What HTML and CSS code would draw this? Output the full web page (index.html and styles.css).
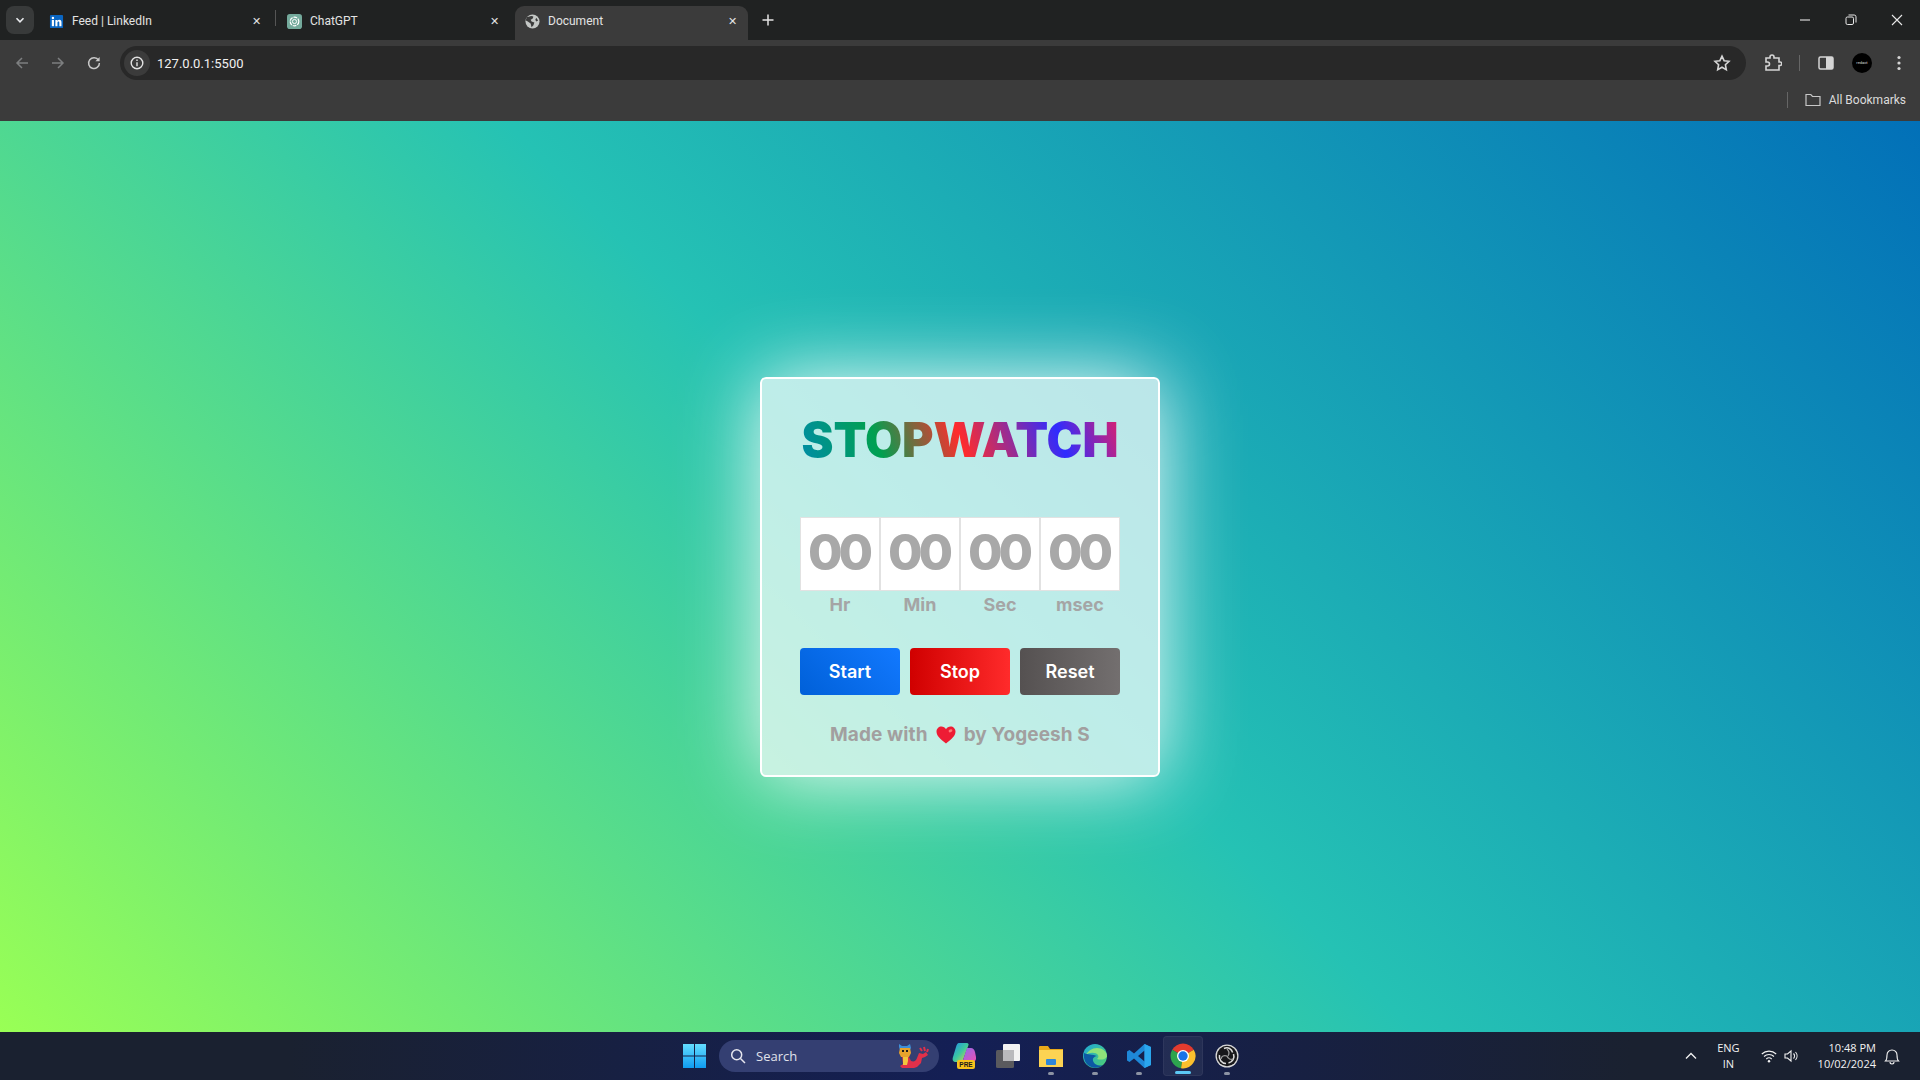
FILE: index.html
```html
<!DOCTYPE html>
<html lang="en">
<head>
	<meta charset="UTF-8">
	<title>Document</title>
	<link rel="stylesheet" href="styles.css">
</head>
<body>
	<!-- browser chrome -->
	<header class="chrome">
		<div class="tabstrip">
			<div class="tab-search">
				<svg width="10" height="10" viewBox="0 0 10 10"><path d="M1.5 3.2 5 6.8l3.5-3.6" fill="none" stroke="#e8eaed" stroke-width="1.6"/></svg>
			</div>
			<div class="tab tab-one">
				<svg class="favicon" viewBox="0 0 16 16"><rect x="1" y="1" width="14" height="14" rx="1" fill="#0a66c2"/><rect x="3" y="6.4" width="2.3" height="6.6" fill="#fff"/><circle cx="4.15" cy="4.2" r="1.3" fill="#fff"/><path d="M6.8 6.4h2.2v1c.5-.8 1.2-1.2 2.1-1.2 1.6 0 2.2 1 2.2 2.7V13H11V9.3c0-.9-.3-1.3-.9-1.3-.7 0-1.1.5-1.1 1.4V13H6.8z" fill="#fff"/></svg>
				<span class="tab-title">Feed | LinkedIn</span>
				<span class="tab-close">✕</span>
			</div>
			<div class="tab-sep"></div>
			<div class="tab tab-two">
				<svg class="favicon" viewBox="0 0 16 16"><rect width="16" height="16" rx="3" fill="#74aa9c"/><circle cx="8" cy="8" r="4.6" fill="none" stroke="#fff" stroke-width="1.3" stroke-dasharray="4 1"/><circle cx="8" cy="8" r="2.2" fill="none" stroke="#fff" stroke-width="1"/></svg>
				<span class="tab-title">ChatGPT</span>
				<span class="tab-close">✕</span>
			</div>
			<div class="tab tab-active">
				<svg class="favicon" viewBox="0 0 16 16"><circle cx="8" cy="8" r="7.5" fill="#c4c7c5"/><path d="M4 3c2-1 4-1 5 0L8 5 6 6l1 2 3 1-1 3-2 2-1-4-3-2-2-1c0-2 1-3 1-4zM12 4l2 3-2 1-1-2z" fill="#3b3b3b"/></svg>
				<span class="tab-title">Document</span>
				<span class="tab-close">✕</span>
			</div>
			<div class="new-tab">
				<svg width="12" height="12" viewBox="0 0 12 12"><path d="M6 .5v11M.5 6h11" stroke="#e3e3e3" stroke-width="1.5"/></svg>
			</div>
			<div class="win-btns">
				<svg width="12" height="12" viewBox="0 0 12 12"><path d="M1 6h10" stroke="#e8e8e8" stroke-width="1.1"/></svg>
				<svg width="12" height="12" viewBox="0 0 12 12"><rect x="1" y="3" width="7.5" height="7.5" rx="1.4" fill="none" stroke="#e8e8e8"/><path d="M3.500 1h5.700A1.800 1.800 0 0 1 11 2.800v5.700" fill="none" stroke="#e8e8e8"/></svg>
				<svg width="12" height="12" viewBox="0 0 12 12"><path d="M1 1l10 10M11 1 1 11" stroke="#e8e8e8" stroke-width="1.1"/></svg>
			</div>
		</div>

		<div class="toolbar">
			<div class="nav-btns">
				<svg width="14" height="14" viewBox="0 0 14 14"><path d="M13 7H2M7 2 2 7l5 5" fill="none" stroke="#7d7f80" stroke-width="1.5"/></svg>
				<svg width="14" height="14" viewBox="0 0 14 14"><path d="M1 7h11M7 2l5 5-5 5" fill="none" stroke="#7d7f80" stroke-width="1.5"/></svg>
				<svg width="14" height="14" viewBox="0 0 14 14"><path d="M11.6 4.300A5.400 5.400 0 1 0 12.4 7" fill="none" stroke="#c7c7c7" stroke-width="1.5"/><path d="M12.6 1v4.200H8.400z" fill="#c7c7c7"/></svg>
			</div>
			<div class="omnibox">
				<div class="site-info">
					<svg width="14" height="14" viewBox="0 0 14 14"><circle cx="7" cy="7" r="5.800" fill="none" stroke="#e3e3e3" stroke-width="1.4"/><path d="M7 6.200v4M7 3.600v1.500" stroke="#e3e3e3" stroke-width="1.4"/></svg>
				</div>
				<span class="url">127.0.0.1:5500</span>
				<svg class="star" width="18" height="18" viewBox="0 0 18 18"><path d="m9 2.200 2.100 4.500 4.900.6-3.600 3.400.9 4.900L9 13.200l-4.300 2.400.9-4.900L2 7.300l4.900-.6z" fill="none" stroke="#d5d5d5" stroke-width="1.6"/></svg>
			</div>
			<div class="tool-icons">
				<svg width="18" height="18" viewBox="0 0 18 18"><path d="M2 4h4V3a2 2 0 0 1 4 0v1h5v4h1a1.700 1.700 0 0 1 0 3.500h-1V16H2v-4h1.500a2 2 0 0 0 0-4H2z" fill="none" stroke="#d5d5d5" stroke-width="1.6"/></svg>
				<span class="tool-sep"></span>
				<svg class="side-panel" width="16" height="16" viewBox="0 0 16 16"><rect x="1" y="2" width="14" height="12" rx="1.500" fill="none" stroke="#d5d5d5" stroke-width="1.5"/><rect x="8" y="2" width="7" height="12" fill="#d5d5d5"/></svg>
				<span class="avatar">redact</span>
				<svg class="menu-dots" width="6" height="16" viewBox="0 0 6 16"><circle cx="3" cy="2.500" r="1.600" fill="#d5d5d5"/><circle cx="3" cy="8" r="1.600" fill="#d5d5d5"/><circle cx="3" cy="13.500" r="1.600" fill="#d5d5d5"/></svg>
			</div>
		</div>

		<div class="bookmarks">
			<span class="tool-sep"></span>
			<svg width="16" height="14" viewBox="0 0 16 14"><path d="M1 12.500V1.500h4.800l1.700 2H15v9z" fill="none" stroke="#c7c7c7" stroke-width="1.2"/></svg>
			<span class="bm-label">All Bookmarks</span>
		</div>
	</header>

	<!-- page -->
	<main class="page">
		<section class="card">
			<h1 class="title">STOPWATCH</h1>
			<div class="timer">
				<div class="unit"><div class="digits">00</div><div class="unit-name">Hr</div></div>
				<div class="unit"><div class="digits">00</div><div class="unit-name">Min</div></div>
				<div class="unit"><div class="digits">00</div><div class="unit-name">Sec</div></div>
				<div class="unit"><div class="digits">00</div><div class="unit-name">msec</div></div>
			</div>
			<div class="buttons">
				<button class="btn btn-start">Start</button>
				<button class="btn btn-stop">Stop</button>
				<button class="btn btn-reset">Reset</button>
			</div>
			<p class="made">
				Made with
				<svg class="heart" width="20" height="18" viewBox="0 0 20 18"><path d="M10 17.500C4 13 .5 9.700.5 5.600.5 2.600 2.800.5 5.400.5 7.300.5 9 1.500 10 3.300 11 1.500 12.700.5 14.600.5c2.600 0 4.900 2.100 4.900 5.100 0 4.100-3.500 7.400-9.500 11.900z" fill="#ee1c34"/><ellipse cx="14.500" cy="4.800" rx="2" ry="1.400" fill="#f77" transform="rotate(-30 14.500 4.800)"/></svg>
				by Yogeesh S
			</p>
		</section>
	</main>

	<!-- windows taskbar -->
	<footer class="taskbar">
		<div></div>
		<div class="task-center">
			<svg class="win-logo" width="23" height="24" viewBox="0 0 23 24"><defs><linearGradient id="winG" x1="0" y1="0" x2="0" y2="1"><stop offset="0" stop-color="#63dcff"/><stop offset="1" stop-color="#0f9cf0"/></linearGradient></defs><path d="M0 0h11v11.500H0zM12 0h11v11.500H12zM0 12.500h11V24H0zM12 12.500h11V24H12z" fill="url(#winG)"/></svg>
			<div class="search-pill">
				<svg width="16" height="16" viewBox="0 0 16 16"><circle cx="6.700" cy="6.700" r="5" fill="none" stroke="#e6e6ee" stroke-width="1.5"/><path d="m10.500 10.500 4.500 4.500" stroke="#e6e6ee" stroke-width="1.5"/></svg>
				<span class="search-text">Search</span>
				<svg class="dragon" width="34" height="26" viewBox="0 0 34 26">
					<path d="M3 1l3 2h5l3-2 1 4-1 2H4L3 4z" fill="#3f8fd8"/>
					<path d="M4 5h10l1 5-2 4H5l-2-4z" fill="#e8a22c"/>
					<rect x="6" y="7" width="2" height="2" fill="#1c1c1c"/>
					<rect x="10" y="7" width="2" height="2" fill="#1c1c1c"/>
					<path d="M6 14h7l2 4c3 1 5 0 6-3l2-5 4 1 3-2 2 3-3 2-3 1-1 5-4 4-3 1H9l-3 0-2-2 3-2z" fill="#e0304a"/>
					<path d="M7 14h5v4l-1 4H7z" fill="#f2c53d"/>
					<path d="M24 5l2 3M28 4l1 4M32 6l-1 3" stroke="#e0304a" stroke-width="2"/>
				</svg>
			</div>
			<svg class="task-icon task-copilot" width="24" height="28" viewBox="0 0 24 28"><defs><linearGradient id="copL" x1="0" y1="0" x2="1" y2="1"><stop offset="0" stop-color="#1f8fe8"/><stop offset=".5" stop-color="#3cc8a0"/><stop offset="1" stop-color="#f2d53c"/></linearGradient><linearGradient id="copR" x1="0" y1="0" x2="1" y2="1"><stop offset="0" stop-color="#8a6cf0"/><stop offset="1" stop-color="#f04fb0"/></linearGradient></defs><path d="M7 1h8c1 0 2 1 1.500 2L11 18c-.5 1-1.500 2-3 2H4c-3 0-4-2-3-5L4 5c.5-2 1.500-4 3-4z" fill="url(#copL)"/><path d="M15 6h4c2 0 3 1 4 4l1 5c.5 3-1 5-4 5h-8c-1 0-1.500-1-1-2z" fill="url(#copR)"/><rect x="5" y="18" width="18" height="9" rx="2" fill="#f7c21c"/><text class="pre-text" x="14" y="25" text-anchor="middle">PRE</text></svg>
			<svg class="task-icon task-view" width="26" height="26" viewBox="0 0 26 26"><rect x="1" y="7" width="18" height="18" rx="1.500" fill="#5a5a5e"/><rect x="8" y="1" width="17" height="17" rx="1" fill="#f2f2f2"/><rect x="8" y="7" width="11" height="11" fill="#b9b9bc"/></svg>
			<div class="task-item">
				<svg width="24" height="24" viewBox="0 0 24 24"><path d="M0 3a1 1 0 0 1 1-1h8l2 3h13v3H0z" fill="#e8a91a"/><path d="M0 6h24v17H0z" fill="#fcd353"/><rect x="7" y="15" width="10" height="6" rx="1" fill="#2e86d8"/></svg>
				<i class="dot"></i>
			</div>
			<div class="task-item">
				<svg width="24" height="24" viewBox="0 0 24 24"><defs><linearGradient id="edgeG" x1="0" y1="0" x2="1" y2="1"><stop offset="0" stop-color="#1fa8d8"/><stop offset="1" stop-color="#50d070"/></linearGradient></defs><circle cx="12" cy="12" r="12" fill="url(#edgeG)"/><path d="M24 12.500C24 7 19 4 14 4 9 4 5 7 3 11c3-3 10-3 12 0 1 2 0 3-1 4 3 1 8 1 10-2.500z" fill="#8fe27a"/><path d="M1 9C0 15 3 22 10 23.500c4 1 8-.5 10-2.500-4 1.500-8 0-9.500-3S10 13 14 12c-4-2-10-1-13-3z" fill="#0c59a4"/></svg>
				<i class="dot"></i>
			</div>
			<div class="task-item">
				<svg width="24" height="24" viewBox="0 0 24 24"><path d="M17.500 0 24 3v18l-6.500 3L7 14.500 2.500 18 0 16.500v-9L2.500 6 7 9.500zm0 6.500L11 12l6.500 5.500z" fill="#1e88d8"/><path d="M17.500 0 24 3v18l-6.500 3z" fill="#2aa6ee"/></svg>
				<i class="dot"></i>
			</div>
			<div class="task-item task-item-active">
				<svg width="26" height="26" viewBox="0 0 26 26"><path d="M13 13 2.200 6.750A12.500 12.500 0 0 1 23.800 6.750z" fill="#e33b2e"/><path d="M13 13 2.200 6.750A12.500 12.500 0 0 0 11 25.340z" fill="#2da44e"/><path d="M13 13 23.800 6.750A12.500 12.500 0 0 1 11 25.340z" fill="#fbc02d"/><circle cx="13" cy="13" r="6" fill="#fff"/><circle cx="13" cy="13" r="4.700" fill="#1a73e8"/></svg>
				<i class="dot dot-active"></i>
			</div>
			<div class="task-item">
				<svg width="24" height="24" viewBox="0 0 24 24"><circle cx="12" cy="12" r="11.500" fill="#d8d8d8"/><circle cx="12" cy="12" r="10.200" fill="#17171a"/><path d="M9 4.500c4-2 8 .5 8.500 4M18.500 10c1.500 4-1 8-5 9M11 19.500c-4 0-7.500-4-6.500-8.500" fill="none" stroke="#ddd" stroke-width="1.6"/><path d="M13 12c2-3 1-5-1-7M12 12c-3-1-5.500 0-6 3M12 12c1 3 4 4 6 3" fill="none" stroke="#9a9a9a" stroke-width="1.3"/></svg>
				<i class="dot"></i>
			</div>
		</div>
		<div class="tray">
			<svg width="12" height="8" viewBox="0 0 12 8"><path d="M1 6.500 6 1.500l5 5" fill="none" stroke="#f2f2f2" stroke-width="1.3"/></svg>
			<div class="lang">ENG<br>IN</div>
			<svg width="16" height="14" viewBox="0 0 16 14"><path d="M.8 5a10.500 10.500 0 0 1 14.400 0M3 7.500a7.300 7.300 0 0 1 10 0M5.300 10a4 4 0 0 1 5.400 0" fill="none" stroke="#f2f2f2" stroke-width="1.1"/><circle cx="8" cy="12.300" r="1.200" fill="#f2f2f2"/></svg>
			<svg width="16" height="14" viewBox="0 0 16 14"><path d="M1 5v4h2.500L7 12V2L3.500 5z" fill="none" stroke="#f2f2f2" stroke-width="1.1"/><path d="M9.500 4.500a3.500 3.500 0 0 1 0 5M11.500 3a6 6 0 0 1 0 8" fill="none" stroke="#f2f2f2" stroke-width="1.1"/></svg>
			<div class="clock">10:48 PM<br>10/02/2024</div>
			<svg width="16" height="17" viewBox="0 0 16 17"><path d="M1.500 13c1.500-1.500 1.500-3 1.500-6a5 5 0 0 1 10 0c0 3 0 4.500 1.500 6zM6 14c0 2.600 4 2.600 4 0" fill="none" stroke="#f2f2f2" stroke-width="1.1"/></svg>
		</div>
	</footer>
</body>
</html>
```

FILE: styles.css
```css
* {
	margin: 0;
	padding: 0;
	box-sizing: border-box;
}
html, body {
	height: 100%;
}
body {
	width: 1920px;
	height: 1080px;
	overflow: hidden;
	display: flex;
	flex-direction: column;
	font-family: "Open Sans", "Noto Sans", sans-serif;
}

/* browser chrome */
.chrome {
	height: 121px;
	background: #3b3b3b;
	color: #e3e3e3;
	flex-shrink: 0;
	font-family: Roboto, "Noto Sans", sans-serif;
}
.tabstrip {
	height: 40px;
	background: #202222;
	display: flex;
	align-items: flex-end;
	padding-left: 6px;
}
.tab-search {
	width: 28px;
	height: 28px;
	margin-bottom: 6px;
	margin-right: 9px;
	border-radius: 8px;
	background: #383a3a;
	display: flex;
	align-items: center;
	justify-content: center;
}
.tab {
	height: 34px;
	display: flex;
	align-items: center;
	font-size: 12px;
	border-radius: 9px 9px 0 0;
}
.tab-one {
	width: 232px;
	padding: 1px 11px 5px 6px;
}
.tab-two {
	width: 239px;
	padding: 1px 13px 5px 11px;
}
.tab-active {
	width: 233px;
	padding: 1px 8px 5px 10px;
	background: #3b3b3b;
}
.favicon {
	width: 15px;
	height: 15px;
	margin-right: 8px;
	flex-shrink: 0;
}
.tab-title {
	flex: 1;
	white-space: nowrap;
}
.tab-close {
	font-size: 11px;
	width: 16px;
	text-align: center;
}
.tab-sep {
	width: 1px;
	height: 16px;
	background: #555;
	margin: 0 0 14px 0;
}
.new-tab {
	width: 40px;
	height: 34px;
	padding-bottom: 6px;
	display: flex;
	align-items: center;
	justify-content: center;
}
.win-btns {
	margin-left: auto;
	width: 121px;
	height: 40px;
	padding-right: 17px;
	display: flex;
	align-items: center;
	justify-content: space-between;
	align-self: flex-start;
}

.toolbar {
	height: 46px;
	padding: 6px 0;
	display: flex;
	align-items: center;
}
.nav-btns {
	width: 120px;
	padding-left: 15px;
	display: flex;
	gap: 22px;
}
.omnibox {
	width: 1626px;
	height: 34px;
	background: #282828;
	border-radius: 17px;
	display: flex;
	align-items: center;
	padding: 0 15px 0 4px;
}
.site-info {
	width: 26px;
	height: 26px;
	border-radius: 50%;
	background: #3b3b3b;
	display: flex;
	align-items: center;
	justify-content: center;
	margin-right: 7px;
}
.url {
	font-size: 13px;
	color: #f0f0f0;
}
.star {
	margin-left: auto;
}
.tool-icons {
	flex: 1;
	padding-left: 18px;
	display: flex;
	align-items: center;
	gap: 17px;
}
.tool-sep {
	width: 1px;
	height: 16px;
	background: #666;
}
.side-panel {
	margin-left: 1px;
}
.avatar {
	width: 20px;
	height: 20px;
	margin-left: 1px;
	border-radius: 50%;
	background: #000;
	color: #ddd;
	font-size: 4px;
	line-height: 20px;
	text-align: center;
	overflow: hidden;
}
.menu-dots {
	margin-left: 7px;
}
.bookmarks {
	height: 35px;
	padding: 0 14px 7px 0;
	display: flex;
	align-items: center;
	justify-content: flex-end;
}
.bookmarks svg {
	margin: 0 8px 0 17px;
}
.bm-label {
	font-size: 12px;
	color: #dcdcdc;
}

/* page */
.page {
	flex: 1;
	display: flex;
	align-items: center;
	justify-content: center;
	background: linear-gradient(45deg, #99ff55 0%, #25c2b4 50%, #0270b8 100%);
}
.card {
	width: 400px;
	height: 400px;
	background: rgba(255, 255, 255, .7);
	border: 2px solid #fff;
	border-radius: 6px;
	box-shadow: 0 0 80px rgba(255, 255, 255, .95);
	display: flex;
	flex-direction: column;
	align-items: center;
	font-family: Inter, "Noto Sans", sans-serif;
}
.title {
	margin-top: 33px;
	font-size: 48px;
	line-height: 56px;
	font-weight: 900;
	background: linear-gradient(70deg, #008ca8 0%, #00a050 25%, #ff2c2c 50%, #2f2cff 80%, #e0206a 100%);
	-webkit-background-clip: text;
	background-clip: text;
	color: transparent;
}
.timer {
	margin-top: 49px;
	display: flex;
}
.unit {
	width: 80px;
	text-align: center;
}
.digits {
	height: 74px;
	padding-right: 3px;
	background: #fff;
	border: 1px solid #e2e2e2;
	font-size: 50px;
	line-height: 68px;
	font-weight: 800;
	letter-spacing: -4px;
	color: #a8a8a8;
}
.unit-name {
	margin-top: 1px;
	font-size: 18px;
	line-height: 26px;
	font-weight: 700;
	color: #a5a5a5;
}
.buttons {
	margin-top: 30px;
	display: flex;
	gap: 10px;
}
.btn {
	width: 100px;
	height: 47px;
	border: none;
	border-radius: 4px;
	color: #fff;
	font-family: Inter, sans-serif;
	font-size: 18px;
	font-weight: 600;
}
.btn-start {
	background: linear-gradient(45deg, #0060d8, #1279ff);
}
.btn-stop {
	background: linear-gradient(90deg, #d00000, #ff2b2b);
}
.btn-reset {
	background: linear-gradient(90deg, #555151, #736f6f);
}
.made {
	margin-top: 26px;
	display: flex;
	align-items: center;
	gap: 8px;
	font-size: 19px;
	line-height: 28px;
	font-weight: 700;
	letter-spacing: .1px;
	color: #a29f9f;
}

/* taskbar */
.taskbar {
	height: 48px;
	flex-shrink: 0;
	display: grid;
	grid-template-columns: 680px auto 1fr;
	align-items: center;
	background: linear-gradient(90deg, #1a2130 0%, #1a2130 15%, #141f55 50%, #1a2130 85%, #1a2130 100%);
	color: #f2f2f2;
}
.task-center {
	display: flex;
	align-items: center;
}
.win-logo {
	margin: 0 13px 0 3px;
}
.search-pill {
	width: 220px;
	height: 32px;
	border-radius: 16px;
	background: #343f72;
	display: flex;
	align-items: center;
	padding: 0 9px 0 11px;
	margin-right: 13px;
}
.search-text {
	margin-left: 10px;
	font-size: 13px;
	color: #e0e2ea;
}
.dragon {
	margin-left: auto;
}
.pre-text {
	font-family: "Liberation Sans", sans-serif;
	font-size: 6.5px;
	font-weight: 700;
	fill: #1b1b1b;
}
.task-view {
	margin: 0 8px 0 19px;
}
.task-item {
	width: 44px;
	height: 40px;
	border-radius: 4px;
	display: flex;
	flex-direction: column;
	align-items: center;
	justify-content: center;
	position: relative;
}
.task-item-active {
	width: 40px;
	margin: 0 2px;
	background: rgba(255, 255, 255, .06);
	border: 1px solid rgba(255, 255, 255, .05);
}
.dot {
	position: absolute;
	bottom: 1px;
	width: 6px;
	height: 3px;
	border-radius: 2px;
	background: #8c93a3;
}
.dot-active {
	width: 16px;
	background: #5cc8f5;
}
.tray {
	display: flex;
	align-items: center;
	justify-content: flex-end;
	padding-right: 20px;
	font-size: 11px;
	line-height: 16px;
}
.lang {
	margin: 0 21px 0 20px;
	text-align: center;
}
.tray svg + svg {
	margin-left: 7px;
}
.clock {
	margin: 0 8px 0 18px;
	text-align: right;
}
```
